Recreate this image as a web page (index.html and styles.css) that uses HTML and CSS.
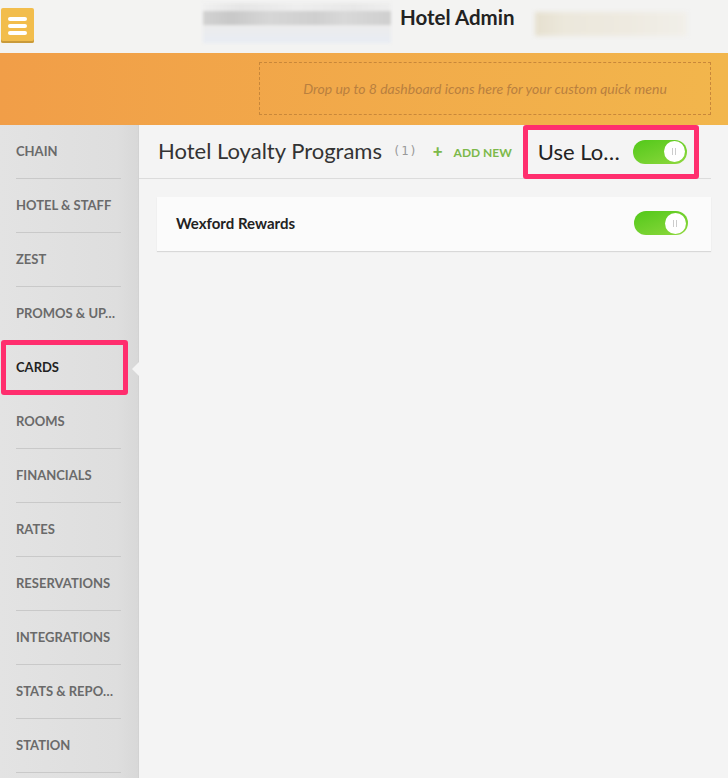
FILE: index.html
```html
<!DOCTYPE html>
<html>
<head>
<meta charset="utf-8">
<link rel="stylesheet" href="styles.css">
</head>
<body>
<header class="topbar">
  <button class="menu-btn" aria-label="menu"><span></span><span></span><span></span></button>
  <div class="blur-left"><i></i><i></i><i></i></div>
  <h1 class="app-title">Hotel Admin</h1>
  <div class="blur-right"></div>
</header>
<div class="quickbar">
  <div class="dropzone">Drop up to 8 dashboard icons here for your custom quick menu</div>
</div>
<div class="main">
  <nav class="sidebar">
    <a class="nav-item">CHAIN</a>
    <a class="nav-item">HOTEL &amp; STAFF</a>
    <a class="nav-item">ZEST</a>
    <a class="nav-item">PROMOS &amp; UP…</a>
    <a class="nav-item active">CARDS</a>
    <a class="nav-item">ROOMS</a>
    <a class="nav-item">FINANCIALS</a>
    <a class="nav-item">RATES</a>
    <a class="nav-item">RESERVATIONS</a>
    <a class="nav-item">INTEGRATIONS</a>
    <a class="nav-item">STATS &amp; REPO…</a>
    <a class="nav-item">STATION</a>
  </nav>
  <section class="content">
    <div class="content-head">
      <h2 class="page-title">Hotel Loyalty Programs</h2>
      <span class="count">(1)</span>
      <a class="add-new"><span class="plus">+</span>ADD NEW</a>
      <div class="use-box">
        <span class="use-label">Use Lo…</span>
        <span class="toggle"><span class="knob"></span></span>
      </div>
    </div>
    <div class="card">
      <span class="card-name">Wexford Rewards</span>
      <span class="toggle"><span class="knob"></span></span>
    </div>
  </section>
</div>
</body>
</html>
```

FILE: styles.css
```css
*, *::before, *::after { box-sizing: border-box; }
html, body { margin: 0; padding: 0; }
body {
  width: 728px;
  height: 778px;
  overflow: hidden;
  font-family: Lato, "Open Sans", sans-serif;
  background: #f4f4f4;
  color: #333;
}
.topbar {
  height: 53px;
  background: #f3f3f2;
  display: flex;
  align-items: flex-start;
}
.menu-btn {
  margin: 8px 0 0 1px;
  width: 33px;
  height: 35px;
  border: 0;
  border-radius: 2px;
  background: #f2bd4c;
  box-shadow: inset 0 -2px 0 #c99a3a;
  padding: 9px 6px 0 7px;
  display: flex;
  flex-direction: column;
  gap: 3px;
}
.menu-btn span {
  display: block;
  height: 4px;
  width: 19px;
  background: #fff;
  border-radius: 2px;
}
.blur-left {
  margin: 3px 0 0 169px;
  width: 188px;
  height: 42px;
  display: flex;
  flex-direction: column;
  filter: blur(1.5px);
}
.blur-left i { display: block; }
.blur-left i:nth-child(1) { height: 8px; background: linear-gradient(90deg, #f0f0f0, #e6e6e6 20%, #eee 50%, #e8e8e8 80%, #eee); }
.blur-left i:nth-child(2) { height: 14px; background: linear-gradient(90deg, #d2d2d2, #c8c8c8 15%, #d6d6d6 35%, #cfcfcf 60%, #d8d8d8 75%, #cfcfcf); }
.blur-left i:nth-child(3) { height: 18px; background: linear-gradient(180deg, #ececec, #e8ecf3); }
.app-title {
  margin: 5px 0 0 9px;
  font-size: 20.5px;
  font-weight: 700;
  color: #222;
}
.blur-right {
  margin: 12px 0 0 20px;
  width: 152px;
  height: 24px;
  background: linear-gradient(90deg, #e6e0cf, #ece8dc 20%, #eeeae0 60%, #f1efe9);
  filter: blur(2px);
}
.quickbar {
  height: 72px;
  background: linear-gradient(90deg, #f19e48, #f2b64c);
  display: flex;
  justify-content: flex-end;
  padding: 9px 17px 0 0;
}
.dropzone {
  width: 452px;
  height: 53px;
  border: 1px dashed #c8873a;
  display: flex;
  align-items: center;
  justify-content: center;
  font-style: italic;
  font-size: 14px;
  color: #b9803f;
}
.main {
  display: flex;
  height: 653px;
}
.sidebar {
  width: 139px;
  background: linear-gradient(90deg, #e3e3e3, #dedede 85%, #d8d8d8);
  border-right: 1px solid #d2d2d2;
  display: flex;
  flex-direction: column;
  flex-shrink: 0;
}
.nav-item {
  position: relative;
  height: 54px;
  margin: 0 17px 0 16px;
  border-bottom: 1px solid #c9c9c9;
  display: flex;
  align-items: center;
  padding-bottom: 2px;
  font-size: 13px;
  font-weight: 700;
  color: #6a6a6a;
  white-space: nowrap;
  flex-shrink: 0;
}
.nav-item.active { color: #222; }
.nav-item.active::before {
  content: "";
  position: absolute;
  left: -15px;
  top: -1px;
  width: 127px;
  height: 55px;
  border: 5px solid #ff2e6e;
  border-radius: 3px;
}
.nav-item.active::after {
  content: "";
  position: absolute;
  right: -18px;
  top: 21px;
  border-style: solid;
  border-width: 7px 7px 7px 0;
  border-color: transparent #f4f4f4 transparent transparent;
}
.content {
  flex: 1;
  padding: 0 17px 0 0;
  background: #f4f4f4;
}
.content-head {
  height: 54px;
  border-bottom: 1px solid #dcdcdc;
  display: flex;
  align-items: center;
  padding-left: 19px;
  padding-bottom: 2px;
}
.page-title {
  margin: 0;
  font-size: 22px;
  font-weight: 400;
  color: #333;
}
.count {
  margin-left: 11px;
  font-family: "DejaVu Sans Mono", monospace;
  font-size: 12px;
  letter-spacing: 1px;
  color: #999;
}
.add-new {
  margin-left: 15px;
  font-size: 12px;
  font-weight: 700;
  color: #7cb94a;
}
.plus { font-size: 17px; font-weight: 900; margin-right: 11px; }
.use-box {
  margin-left: 11px;
  height: 54px;
  width: 176px;
  margin-bottom: -2px;
  border: 5px solid #ff2e6e;
  border-radius: 3px;
  display: flex;
  align-items: center;
  padding-left: 10px;
}
.use-label {
  font-size: 22px;
  color: #222;
  width: 95px;
  margin-top: -1px;
}
.toggle {
  width: 54px;
  height: 24px;
  border-radius: 12px;
  background: linear-gradient(160deg, #52c81a, #8ed83e);
  display: flex;
  justify-content: flex-end;
  align-items: center;
  padding-right: 2px;
  flex-shrink: 0;
}
.knob {
  width: 21px;
  height: 21px;
  border-radius: 50%;
  background: #fff;
  position: relative;
}
.knob::after {
  content: "";
  position: absolute;
  left: 8px;
  top: 7px;
  width: 4px;
  height: 7px;
  border-left: 1px solid #ccc;
  border-right: 1px solid #ccc;
}
.card {
  margin: 18px 0 0 18px;
  height: 54px;
  background: #fbfbfb;
  box-shadow: 0 1px 1px #d8d8d8;
  display: flex;
  align-items: center;
  justify-content: space-between;
  padding: 0 23px 3px 19px;
}
.card .toggle { margin-top: 1px; }
.card-name {
  font-size: 15px;
  font-weight: 700;
  color: #222;
}
```
